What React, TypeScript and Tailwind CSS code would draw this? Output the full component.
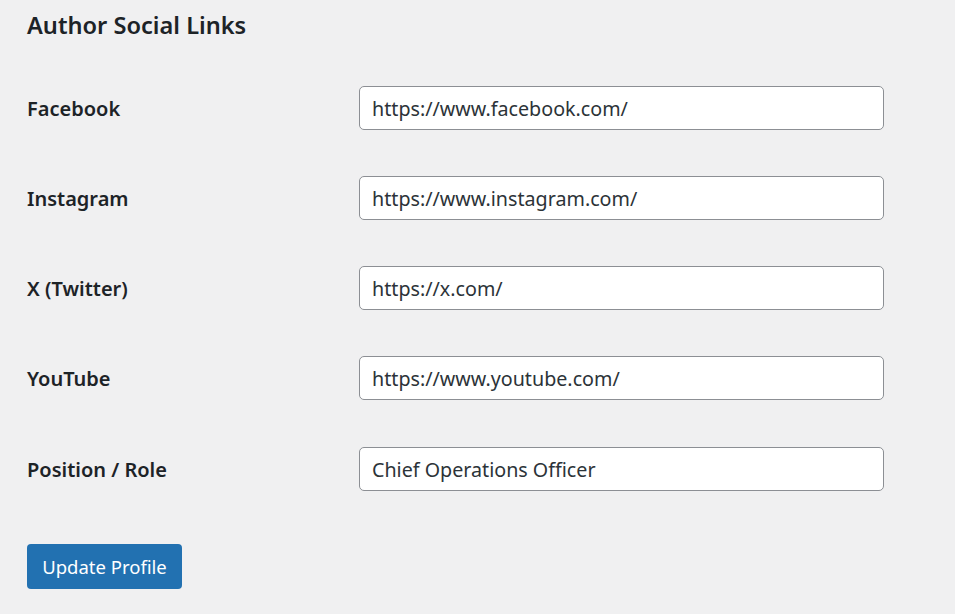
const rows = [
  { label: "Facebook", value: "https://www.facebook.com/" },
  { label: "Instagram", value: "https://www.instagram.com/" },
  { label: "X (Twitter)", value: "https://x.com/" },
  { label: "YouTube", value: "https://www.youtube.com/" },
  { label: "Position / Role", value: "Chief Operations Officer" },
];

export default function App() {
  return (
    <div
      className="min-h-screen bg-[#f0f0f1] pl-[27px] text-[#1d2327]"
      style={{ fontFamily: '"Noto Sans", "Open Sans", sans-serif' }}
    >
      {/* Section heading */}
      <h2 className="h-[63px] pt-[8px] text-[23.6px] leading-[34px] font-semibold">Author Social Links</h2>

      <div className="flex flex-col">
        {rows.map((row, i) => (
          <div key={row.label} className={`flex items-center ${i === 4 ? "h-[92px]" : "h-[90px]"}`}>
            <label className="mt-[2px] w-[332px] text-[20px] font-semibold">{row.label}</label>
            <input
              type="text"
              defaultValue={row.value}
              className="h-[44px] w-[525px] rounded-[5px] border border-[#8c8f94] bg-white px-[12px] text-[19.7px] text-[#2c3338] outline-none"
            />
          </div>
        ))}
      </div>

      <button className="mt-[29px] h-[45px] w-[155px] rounded-[4px] bg-[#2271b1] text-[18.5px] text-white">
        Update Profile
      </button>
    </div>
  );
}
